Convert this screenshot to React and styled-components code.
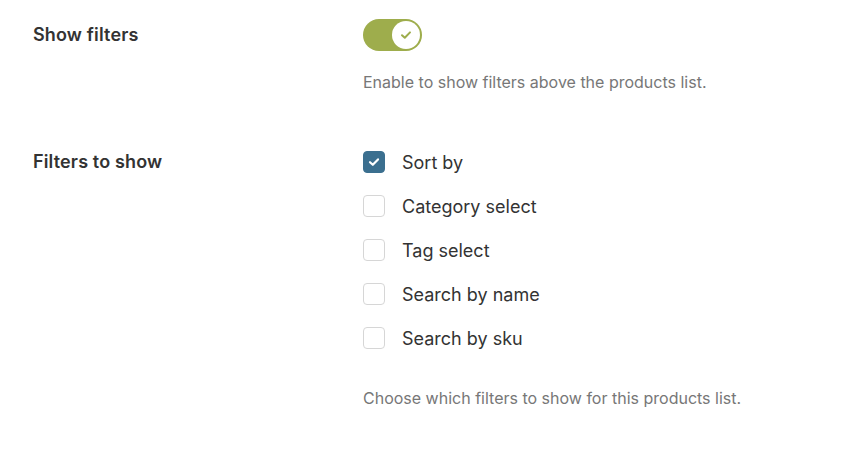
import React, { useState } from "react";
import styled, { createGlobalStyle } from "styled-components";

const Global = createGlobalStyle`
  html, body { margin: 0; padding: 0; background: #fff; }
  body { font-family: Inter, "Noto Sans", sans-serif; color: #333; }
`;

const Page = styled.div`
  padding: 19px 33px 0 33px;
  display: flex;
  flex-direction: column;
  gap: 59px;
`;

const Row = styled.div`
  display: grid;
  grid-template-columns: 330px 1fr;
  align-items: start;
`;

const Label = styled.div`
  font-size: 18px;
  font-weight: 600;
  letter-spacing: 0.15px;
  color: #333;
  line-height: ${(p) => p.$lh}px;
`;

const Control = styled.div`
  display: flex;
  flex-direction: column;
`;

const Help = styled.div`
  font-size: 16px;
  color: #777;
  margin-top: ${(p) => p.$mt}px;
  line-height: 20px;
`;

const Toggle = styled.button`
  width: 59px;
  height: 32px;
  border-radius: 16px;
  border: none;
  padding: 2px;
  background: ${(p) => (p.$on ? "#9ead4c" : "#ccc")};
  display: flex;
  justify-content: ${(p) => (p.$on ? "flex-end" : "flex-start")};
  cursor: pointer;
`;

const Knob = styled.span`
  width: 28px;
  height: 28px;
  border-radius: 50%;
  background: #fff;
  display: flex;
  align-items: center;
  justify-content: center;
`;

const List = styled.div`
  display: flex;
  flex-direction: column;
  gap: 22px;
`;

const Item = styled.label`
  display: flex;
  align-items: center;
  gap: 17px;
  font-size: 18px;
  color: #333;
  height: 22px;
  cursor: pointer;
`;

const Box = styled.span`
  width: 22px;
  height: 22px;
  box-sizing: border-box;
  border-radius: 4px;
  border: 1px solid ${(p) => (p.$checked ? "#3b6f8f" : "#d6d6d6")};
  background: ${(p) => (p.$checked ? "#3b6f8f" : "#fff")};
  display: flex;
  align-items: center;
  justify-content: center;
  flex: none;
`;

const items = ["Sort by", "Category select", "Tag select", "Search by name", "Search by sku"];

export default function App() {
  const [on, setOn] = useState(true);
  const [checked, setChecked] = useState({ "Sort by": true });
  return (
    <>
      <Global />
      <Page>
        <Row>
          <Label $lh={32}>Show filters</Label>
          <Control>
            <Toggle $on={on} onClick={() => setOn(!on)}>
              <Knob>
                {on && (
                  <svg width="12" height="10" viewBox="0 0 12 10">
                    <path d="M2 5.2 L4.8 7.8 L10 2.4" fill="none" stroke="#9ead4c" strokeWidth="2" strokeLinecap="round" strokeLinejoin="round" />
                  </svg>
                )}
              </Knob>
            </Toggle>
            <Help $mt={21}>Enable to show filters above the products list.</Help>
          </Control>
        </Row>
        <Row>
          <Label $lh={22}>Filters to show</Label>
          <Control>
            <List>
              {items.map((it) => (
                <Item key={it} onClick={() => setChecked({ ...checked, [it]: !checked[it] })}>
                  <Box $checked={!!checked[it]}>
                    {checked[it] && (
                      <svg width="12" height="10" viewBox="0 0 12 10">
                        <path d="M2 5.2 L4.8 7.8 L10 2.4" fill="none" stroke="#fff" strokeWidth="2.2" strokeLinecap="round" strokeLinejoin="round" />
                      </svg>
                    )}
                  </Box>
                  {it}
                </Item>
              ))}
            </List>
            <Help $mt={39}>Choose which filters to show for this products list.</Help>
          </Control>
        </Row>
      </Page>
    </>
  );
}
